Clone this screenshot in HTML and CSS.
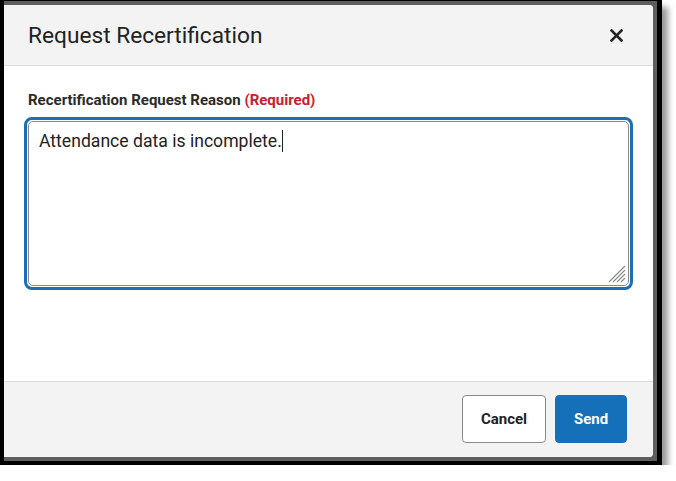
FILE: index.html
```html
<!DOCTYPE html>
<html>
<head>
<meta charset="utf-8">
<link rel="stylesheet" href="styles.css">
</head>
<body>
<div class="frame">
  <div class="overlay">
    <div class="dialog">
      <div class="header">
        <h1 class="title">Request Recertification</h1>
        <svg class="close" width="13" height="13" viewBox="0 0 13 13"><path d="M1.5 1.5 L11.5 11.5 M11.5 1.5 L1.5 11.5" stroke="#222" stroke-width="2.6" stroke-linecap="square"/></svg>
      </div>
      <div class="body">
        <div class="label">Recertification Request Reason <span class="req">(Required)</span></div>
        <div class="ring">
          <div class="ta"><span class="ta-text">Attendance data is incomplete.</span><span class="caret"></span>
            <svg class="grip" width="18" height="18" viewBox="0 0 18 18"><path d="M17 1 L1 17 M17 5 L5 17 M17 9 L9 17 M17 13 L13 17" stroke="#8a8a8a" stroke-width="1.1"/></svg>
          </div>
        </div>
      </div>
      <div class="footer">
        <button class="btn btn-cancel">Cancel</button>
        <button class="btn btn-send">Send</button>
      </div>
    </div>
  </div>
</div>
</body>
</html>
```

FILE: styles.css
```css
html, body {
  margin: 0;
  padding: 0;
  background: #ffffff;
}
body {
  font-family: Roboto, "Liberation Sans", sans-serif;
}
.frame {
  width: 653px;
  background: #000;
  padding: 1px 5px 4px 4px;
  box-shadow: 6px 7px 6px rgba(0, 0, 0, 0.4);
}
.overlay {
  background: #5e5e5e;
  padding: 4px 4px 4px 0;
}
.dialog {
  width: 649px;
  height: 452px;
  background: #fff;
  border-radius: 0 4px 4px 0;
  overflow: hidden;
  display: flex;
  flex-direction: column;
}
.header {
  height: 60px;
  background: #f3f3f3;
  border-bottom: 1px solid #dcdcdc;
  display: flex;
  align-items: center;
  justify-content: space-between;
  padding: 0 30px 0 24px;
}
.title {
  margin: 0;
  font-size: 22.7px;
  font-weight: 400;
  color: #222;
  padding-top: 1px;
}
.close {
  display: block;
  margin-top: 1px;
}
.body {
  flex: 1;
  padding: 26px 20px 0 20px;
}
.label {
  font-size: 15px;
  font-weight: 700;
  color: #2a2a2a;
  line-height: 17px;
  padding-left: 4px;
  margin-bottom: 8px;
}
.req {
  color: #c8202e;
}
.ring {
  border: 3px solid #1a6fb8;
  border-radius: 8px;
  padding: 1px;
}
.ta {
  position: relative;
  height: 154px;
  border: 1px solid #8a8a8a;
  border-radius: 5px;
  padding: 7px 10px 2px;
  font-size: 17.6px;
  line-height: 24px;
  color: #222;
}
.caret {
  display: inline-block;
  width: 1px;
  height: 22px;
  background: #222;
  vertical-align: -5px;
}
.grip {
  position: absolute;
  right: 2px;
  bottom: 2px;
}
.footer {
  height: 74px;
  background: #f3f3f3;
  border-top: 1px solid #dcdcdc;
  display: flex;
  align-items: center;
  justify-content: flex-end;
  gap: 9px;
  padding: 0 26px 1px 0;
}
.btn {
  height: 48px;
  border-radius: 4px;
  font-family: Roboto, "Liberation Sans", sans-serif;
  font-size: 15px;
  font-weight: 700;
  cursor: pointer;
}
.btn-cancel {
  width: 84px;
  background: #fff;
  border: 1px solid #8a8a8a;
  color: #222;
}
.btn-send {
  width: 72px;
  background: #1570b9;
  border: 1px solid #1570b9;
  color: #fff;
}
```
